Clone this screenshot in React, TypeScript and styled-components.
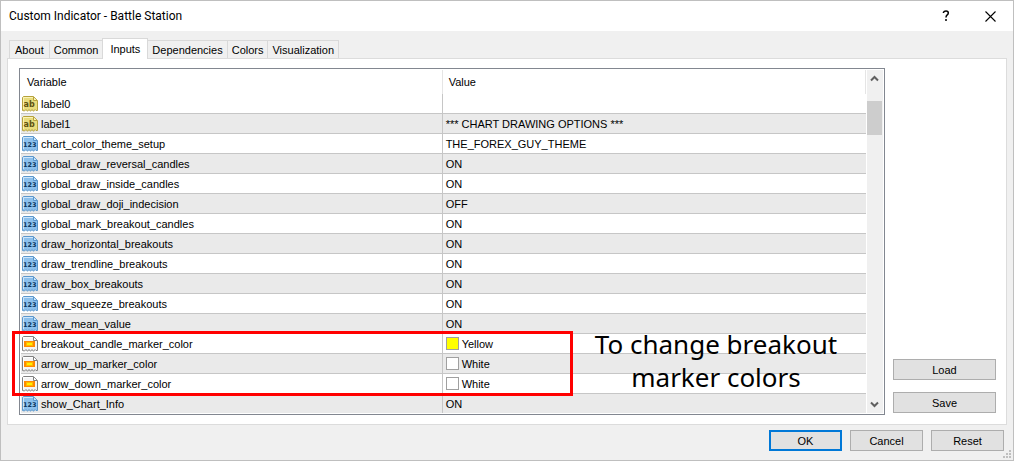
import React from "react";
import styled, { createGlobalStyle } from "styled-components";

const GlobalStyle = createGlobalStyle`
  * { box-sizing: border-box; }
  body { margin: 0; background: #f0f0f0; }
  button { font: inherit; color: inherit; }
`;

const Dialog = styled.div`
  display: flex;
  flex-direction: column;
  min-height: 100vh;
  position: relative;
  background: #f0f0f0;
  border: 1px solid #bfbfbf;
  color: #000;
  font: 11px/14px "Liberation Sans", Arial, sans-serif;
`;

const TitleBar = styled.header`
  display: flex;
  align-items: center;
  height: 30px;
  padding-left: 8px;
  background: #fff;
`;

const Title = styled.h1`
  flex: 1;
  margin: 0;
  font: 12px/16px Roboto, "Segoe UI", sans-serif;
`;

const CaptionButton = styled.button`
  display: grid;
  place-items: center;
  width: 45px;
  height: 28px;
  padding: 0;
  border: 0;
  background: none;
`;

const Content = styled.main`
  display: flex;
  flex-direction: column;
  padding: 7px 6px 0;
`;

const TabStrip = styled.div`
  display: flex;
  align-items: flex-end;
  height: 20px;
  padding-left: 2px;
`;

const Tab = styled.button<{ $active?: boolean }>`
  position: relative;
  height: ${(p) => (p.$active ? 21 : 18)}px;
  margin-bottom: ${(p) => (p.$active ? -1 : 0)}px;
  margin-left: ${(p) => (p.$active ? -1 : 0)}px;
  padding: ${(p) => (p.$active ? "0 7px 1px" : "0 4px")};
  border: 1px solid #d9d9d9;
  border-width: ${(p) => (p.$active ? "1px 1px 0" : "1px 1px 0 0")};
  background: ${(p) => (p.$active ? "#fff" : "#f0f0f0")};
  white-space: nowrap;
  &:first-child {
    padding: 0 5px;
    border-left-width: 1px;
  }
`;

const Panel = styled.section`
  display: flex;
  gap: 8px;
  padding: 9px 10px 9px 11px;
  background: #fff;
  border: 1px solid #dcdcdc;
`;

const ListBox = styled.div`
  position: relative;
  display: flex;
  flex: 1;
  min-width: 0;
  padding: 1px;
  background: #fff;
  border: 1px solid #828790;
`;

const Table = styled.table`
  flex: 1;
  width: 100%;
  table-layout: fixed;
  border-collapse: separate;
  border-spacing: 0;
`;

const HeadCell = styled.th`
  height: 24px;
  padding: 0 6px;
  border-right: 1px solid #e5e5e5;
  font-weight: 400;
  text-align: left;
  &:first-child { width: 49.9%; }
`;

const Row = styled.tr`
  &:nth-child(even) { background: #eaeaea; }
  &:last-child td { height: 19px; border-bottom: 0; }
`;

const Cell = styled.td`
  height: 20px;
  padding: 0 3px 0 1px;
  border-bottom: 1px solid #c6c6c6;
  &:first-child { border-right: 1px solid #c6c6c6; }
  &:last-child { padding-left: 3px; }
`;

const CellContent = styled.div`
  display: flex;
  align-items: center;
  gap: 3px;
  white-space: nowrap;
`;

const Swatch = styled.span<{ $color: string }>`
  width: 13px;
  height: 13px;
  border: 1px solid #a0a0a0;
  background: ${(p) => p.$color};
`;

const ScrollBar = styled.div`
  display: flex;
  flex-direction: column;
  width: 16px;
  margin-left: 1px;
  background: #f0f0f0;
`;

const ScrollButton = styled.button`
  display: grid;
  place-items: center;
  width: 15px;
  height: 17px;
  padding: 0;
  border: 0;
  background: none;
`;

const ScrollTrack = styled.div`
  flex: 1;
  padding-top: 14px;
`;

const ScrollThumb = styled.div`
  width: 15px;
  height: 34px;
  background: #cdcdcd;
`;

const Highlight = styled.div`
  position: absolute;
  left: -8px;
  top: 262px;
  width: 561px;
  height: 65px;
  border: 3px solid #f00;
  pointer-events: none;
`;

const Note = styled.p`
  position: absolute;
  left: 566px;
  top: 259px;
  width: 260px;
  margin: 0;
  font: 26px/33px "Noto Sans", Tahoma, sans-serif;
  text-align: center;
  pointer-events: none;
`;

const SideActions = styled.div`
  display: flex;
  flex-direction: column;
  justify-content: flex-end;
  gap: 12px;
  width: 103px;
  padding-bottom: 2px;
`;

const Footer = styled.footer`
  display: flex;
  justify-content: flex-end;
  gap: 8px;
  padding: 5px 9px 9px;
`;

const PushButton = styled.button<{ $primary?: boolean; $fixed?: boolean }>`
  width: ${(p) => (p.$fixed ? "73px" : "100%")};
  height: 21px;
  padding: 0;
  background: #e1e1e1;
  border: ${(p) => (p.$primary ? "2px solid #0078d7" : "1px solid #adadad")};
`;

const Grip = styled.svg`
  position: absolute;
  right: 2px;
  bottom: 2px;
`;

const IconText = styled.text`
  font-family: "DejaVu Sans", sans-serif;
  font-weight: 700;
`;

type Kind = "text" | "number" | "color";

function VariableIcon({ kind }: { kind: Kind }) {
  const palette = {
    text: { fill: "#e9dc7c", edge: "#b5a13c", fold: "#faf3b8" },
    number: { fill: "#8cc0ec", edge: "#5b97cc", fold: "#cfe6fa" },
    color: { fill: "#f4f4f4", edge: "#808080", fold: "#ffffff" },
  }[kind];
  return (
    <svg width="16" height="16" viewBox="0 0 16 16" aria-hidden="true">
      <path
        d="M1.5 .5H11.5L15.5 4.5V14.5H14L13 13.5L11.5 15.3L10 13.5L8.5 15.3L7 13.5L5.5 15.3L4 13.5L2.5 15L.5 14.5V1.5Z"
        fill={palette.fill}
        stroke={palette.edge}
      />
      <path d="M1.5 13V1.5H11" fill="none" stroke={palette.fold} />
      <path d="M11.5 1V4.5H15" fill={palette.fold} stroke={palette.edge} />
      {kind === "text" && (
        <IconText x="1.5" y="11" fontSize="8" fill="#5f5212">ab</IconText>
      )}
      {kind === "number" && (
        <IconText x="1" y="11" fontSize="6.5" fill="#0a3560">123</IconText>
      )}
      {kind === "color" && (
        <>
          <rect x="2" y="5" width="11" height="6" fill="#ff8a00" />
          <rect x="4" y="6" width="7" height="4" fill="#ffb800" />
          <rect x="5" y="7" width="5" height="2" fill="#fff000" />
        </>
      )}
    </svg>
  );
}

const tabs = ["About", "Common", "Inputs", "Dependencies", "Colors", "Visualization"];

const rows: { kind: Kind; name: string; value: string; swatch?: string }[] = [
  { kind: "text", name: "label0", value: "" },
  { kind: "text", name: "label1", value: "*** CHART DRAWING OPTIONS ***" },
  { kind: "number", name: "chart_color_theme_setup", value: "THE_FOREX_GUY_THEME" },
  { kind: "number", name: "global_draw_reversal_candles", value: "ON" },
  { kind: "number", name: "global_draw_inside_candles", value: "ON" },
  { kind: "number", name: "global_draw_doji_indecision", value: "OFF" },
  { kind: "number", name: "global_mark_breakout_candles", value: "ON" },
  { kind: "number", name: "draw_horizontal_breakouts", value: "ON" },
  { kind: "number", name: "draw_trendline_breakouts", value: "ON" },
  { kind: "number", name: "draw_box_breakouts", value: "ON" },
  { kind: "number", name: "draw_squeeze_breakouts", value: "ON" },
  { kind: "number", name: "draw_mean_value", value: "ON" },
  { kind: "color", name: "breakout_candle_marker_color", value: "Yellow", swatch: "#ffff00" },
  { kind: "color", name: "arrow_up_marker_color", value: "White", swatch: "#ffffff" },
  { kind: "color", name: "arrow_down_marker_color", value: "White", swatch: "#ffffff" },
  { kind: "number", name: "show_Chart_Info", value: "ON" },
];

export default function App() {
  return (
    <Dialog role="dialog" aria-labelledby="dialog-title">
      <GlobalStyle />
      <TitleBar>
        <Title id="dialog-title">Custom Indicator - Battle Station</Title>
        <CaptionButton aria-label="Help">
          <svg width="8" height="12" viewBox="0 0 8 12" fill="none" stroke="#000" strokeWidth="1.5">
            <path d="M1.5 3V2.2Q2 1 4 1Q6.3 1 6.3 3Q6.3 4.2 5 5.2Q4 6 4 7.6M4 9V11" />
          </svg>
        </CaptionButton>
        <CaptionButton aria-label="Close">
          <svg width="11" height="11" viewBox="0 0 11 11" stroke="#000" strokeWidth="1.1">
            <path d="M.5 .5L10.5 10.5M10.5 .5L.5 10.5" />
          </svg>
        </CaptionButton>
      </TitleBar>
      <Content>
        <TabStrip role="tablist">
          {tabs.map((t) => (
            <Tab key={t} role="tab" aria-selected={t === "Inputs"} $active={t === "Inputs"}>
              {t}
            </Tab>
          ))}
        </TabStrip>
        <Panel role="tabpanel" aria-label="Inputs">
          <ListBox>
            <Table>
              <thead>
                <tr>
                  <HeadCell scope="col">Variable</HeadCell>
                  <HeadCell scope="col">Value</HeadCell>
                </tr>
              </thead>
              <tbody>
                {rows.map((r) => (
                  <Row key={r.name}>
                    <Cell>
                      <CellContent>
                        <VariableIcon kind={r.kind} />
                        {r.name}
                      </CellContent>
                    </Cell>
                    <Cell>
                      <CellContent>
                        {r.swatch && <Swatch $color={r.swatch} />}
                        {r.value}
                      </CellContent>
                    </Cell>
                  </Row>
                ))}
              </tbody>
            </Table>
            <ScrollBar>
              <ScrollButton aria-label="Scroll up">
                <svg width="9" height="7" viewBox="0 0 9 7" fill="none" stroke="#606060" strokeWidth="2">
                  <path d="M1 5.5L4.5 2L8 5.5" />
                </svg>
              </ScrollButton>
              <ScrollTrack>
                <ScrollThumb />
              </ScrollTrack>
              <ScrollButton aria-label="Scroll down">
                <svg width="9" height="7" viewBox="0 0 9 7" fill="none" stroke="#606060" strokeWidth="2">
                  <path d="M1 1.5L4.5 5L8 1.5" />
                </svg>
              </ScrollButton>
            </ScrollBar>
            <Highlight />
            <Note>
              To change breakout
              <br />
              marker colors
            </Note>
          </ListBox>
          <SideActions>
            <PushButton>Load</PushButton>
            <PushButton>Save</PushButton>
          </SideActions>
        </Panel>
      </Content>
      <Footer>
        <PushButton $primary $fixed>OK</PushButton>
        <PushButton $fixed>Cancel</PushButton>
        <PushButton $fixed>Reset</PushButton>
      </Footer>
      <Grip width="8" height="8" viewBox="0 0 8 8" fill="#bfbfbf" aria-hidden="true">
        <path d="M6 0h2v2h-2zM3 3h2v2h-2zM6 3h2v2h-2zM0 6h2v2h-2zM3 6h2v2h-2zM6 6h2v2h-2z" />
      </Grip>
    </Dialog>
  );
}
